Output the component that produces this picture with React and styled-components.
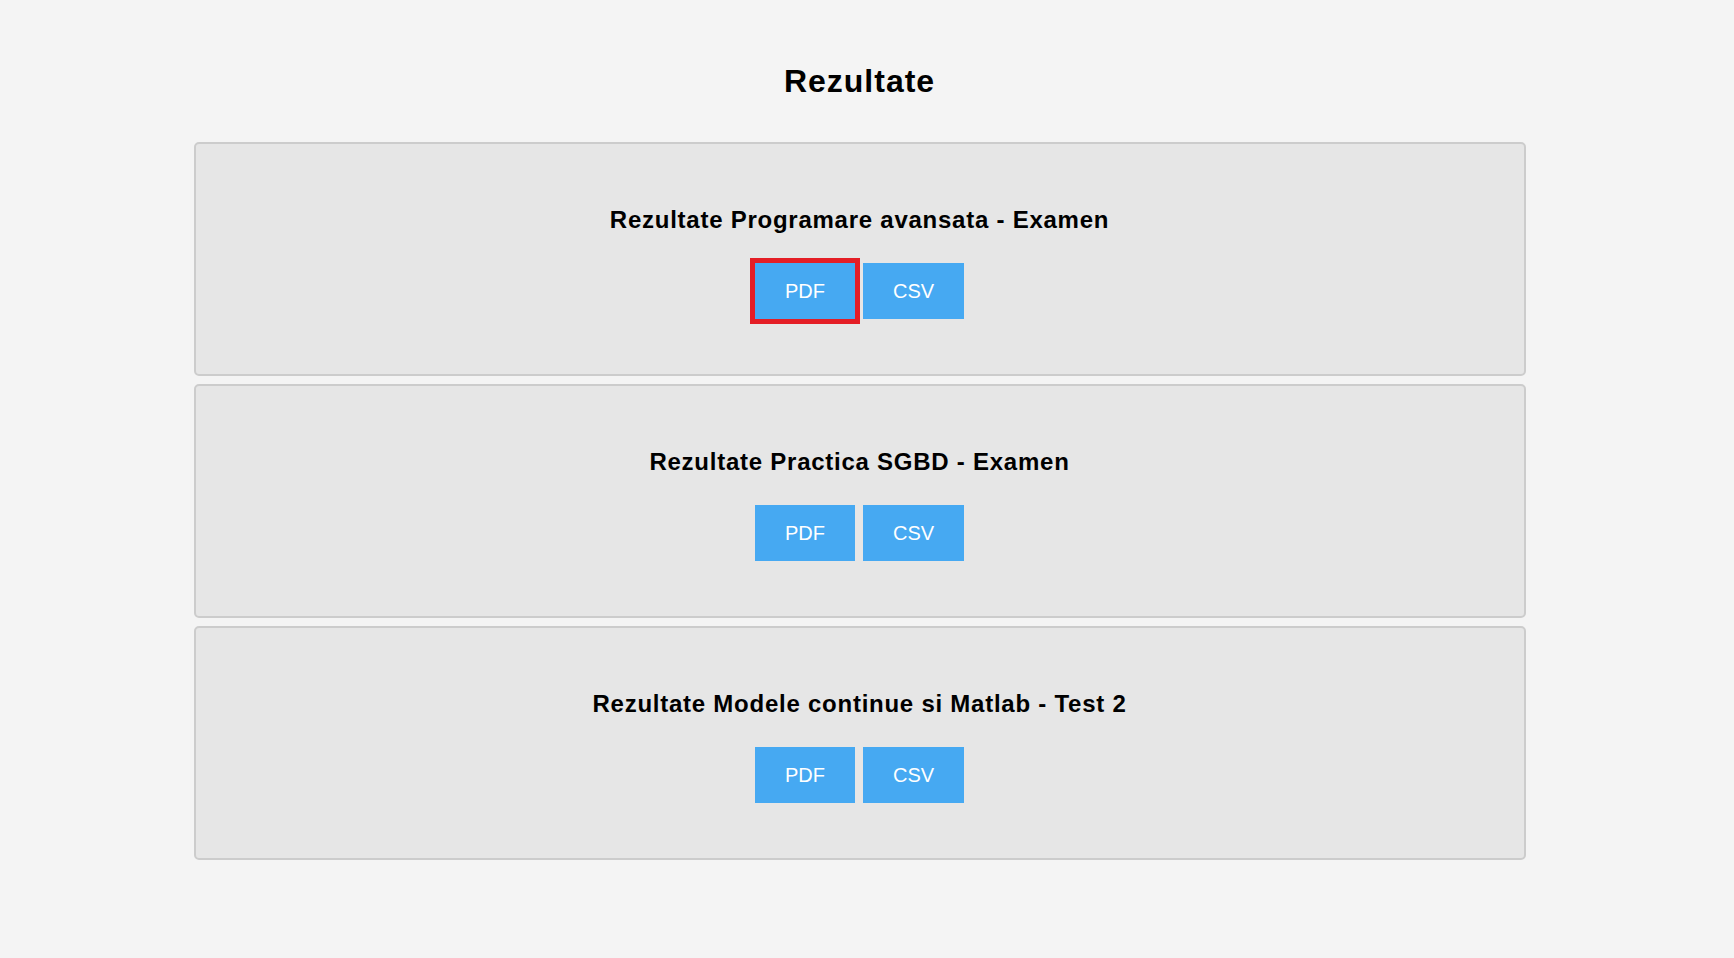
import React from "react";
import styled, { createGlobalStyle } from "styled-components";

const results = [
	{ id: 1, title: "Rezultate Programare avansata - Examen", focused: true },
	{ id: 2, title: "Rezultate Practica SGBD - Examen" },
	{ id: 3, title: "Rezultate Modele continue si Matlab - Test 2" },
];

const GlobalStyle = createGlobalStyle`
	html, body {
		margin: 0;
		padding: 0;
		background: #f4f4f4;
		font-family: "Liberation Sans", Arial, sans-serif;
		color: #000;
	}
`;

const App = () => {
	return (
		<>
			<GlobalStyle />
			<Page>
				<Title>Rezultate</Title>
				<List>
					{results.map((item) => (
						<Card key={item.id}>
							<CardTitle>{item.title}</CardTitle>
							<Actions>
								<Button className={item.focused && "focused"}>PDF</Button>
								<Button>CSV</Button>
							</Actions>
						</Card>
					))}
				</List>
			</Page>
		</>
	);
};

const Page = styled.div`
	display: flex;
	flex-direction: column;
	align-items: center;
	padding: 63px 15px 98px 0;
	min-height: 958px;
	box-sizing: border-box;
`;

const Title = styled.h1`
	margin: 0 0 42px;
	font-size: 32px;
	line-height: 37px;
	font-weight: 700;
	letter-spacing: 1px;
`;

const List = styled.div`
	display: flex;
	flex-direction: column;
	gap: 8px;
	width: 1332px;
`;

const Card = styled.div`
	box-sizing: border-box;
	height: 234px;
	padding: 62px 20px 55px;
	background: #e6e6e6;
	border: 2px solid #cccccc;
	border-radius: 5px;
	display: flex;
	flex-direction: column;
	align-items: center;
`;

const CardTitle = styled.h2`
	margin: 0 0 29px;
	font-size: 24px;
	line-height: 28px;
	font-weight: 700;
	letter-spacing: 0.75px;
`;

const Actions = styled.div`
	display: flex;
	gap: 8px;
`;

const Button = styled.button`
	height: 56px;
	padding: 0 30px;
	border: none;
	background: #46a9f2;
	color: #fff;
	font-family: "Liberation Sans", Arial, sans-serif;
	font-size: 20px;
	cursor: pointer;

	&.focused {
		box-shadow: 0 0 0 5px #e41e26;
	}
`;

export default App;
